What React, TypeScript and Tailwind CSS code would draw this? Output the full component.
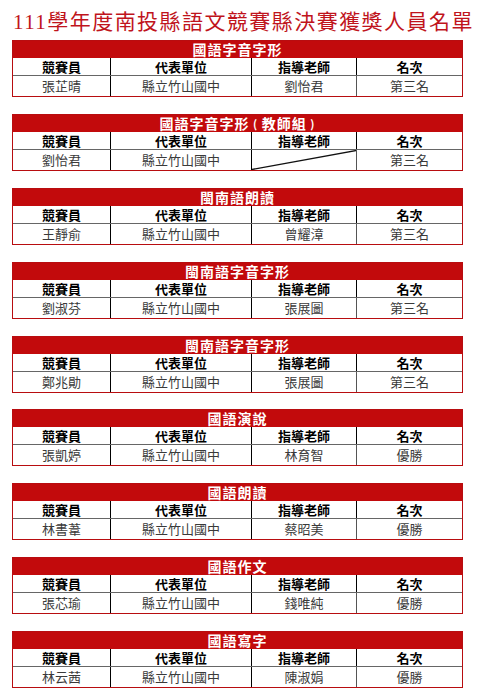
const rows = [
  { title: "國語字音字形", name: "張芷晴", school: "縣立竹山國中", teacher: "劉怡君", rank: "第三名" },
  { title: "國語字音字形", sub: "教師組", name: "劉怡君", school: "縣立竹山國中", teacher: "", rank: "第三名" },
  { title: "閩南語朗讀", name: "王靜俞", school: "縣立竹山國中", teacher: "曾耀漳", rank: "第三名" },
  { title: "閩南語字音字形", name: "劉淑芬", school: "縣立竹山國中", teacher: "張展圖", rank: "第三名" },
  { title: "閩南語字音字形", name: "鄭兆勛", school: "縣立竹山國中", teacher: "張展圖", rank: "第三名" },
  { title: "國語演說", name: "張凱婷", school: "縣立竹山國中", teacher: "林育智", rank: "優勝" },
  { title: "國語朗讀", name: "林書葦", school: "縣立竹山國中", teacher: "蔡昭美", rank: "優勝" },
  { title: "國語作文", name: "張芯瑜", school: "縣立竹山國中", teacher: "錢唯純", rank: "優勝" },
  { title: "國語寫字", name: "林云茜", school: "縣立竹山國中", teacher: "陳淑娟", rank: "優勝" },
];

const heads = ["競賽員", "代表單位", "指導老師", "名次"];

type Row = { title: string; sub?: string; name: string; school: string; teacher: string; rank: string };

const AwardTable = ({ row }: { row: Row }) => {
  return (
    <div className="border border-[#b80d10] bg-white">
      <div className="h-[17px] bg-[#c20a0c] text-white font-bold text-[14px] tracking-[1px] leading-[17px] text-center whitespace-pre">
        {row.title}
        {row.sub && (
          <>
            <span className="text-[11px] leading-[11px] align-[1px]"> ( </span>
            {row.sub}
            <span className="text-[11px] leading-[11px] align-[1px]"> )</span>
          </>
        )}
      </div>
      <div className="grid grid-cols-[97px_141px_105px_1fr] h-[18px] border-b border-[#666] text-[13px] font-bold text-black leading-[17px] text-center">
        {heads.map((h, i) => (
          <div key={h} className={i > 0 ? "border-l border-black" : ""}>
            {h}
          </div>
        ))}
      </div>
      <div className="grid grid-cols-[97px_141px_105px_1fr] h-[20px] text-[13px] text-[#3a3a3a] leading-[20px] text-center">
        <div>{row.name}</div>
        <div className="border-l border-black">{row.school}</div>
        <div className="border-l border-black relative">
          {row.teacher || (
            <svg className="absolute inset-0 w-full h-full" viewBox="0 0 104 20" preserveAspectRatio="none">
              <line x1="0" y1="19.5" x2="104" y2="0.5" stroke="#111" strokeWidth="1.3" />
            </svg>
          )}
        </div>
        <div className="border-l border-[#555]">{row.rank}</div>
      </div>
    </div>
  );
};

export default function App() {
  return (
    <div
      className="w-[477px] h-[700px] bg-white overflow-hidden"
      style={{ fontFamily: '"Noto Sans CJK TC", "Noto Sans", sans-serif' }}
    >
      <div
        className="h-[40px] pl-[13px] pt-[9px] text-[21px] tracking-[1.45px] leading-[26px] text-[#c0141c] whitespace-nowrap"
        style={{ fontFamily: '"Liberation Serif", "Noto Sans CJK TC", serif' }}
      >
        111學年度南投縣語文競賽縣決賽獲獎人員名單
      </div>
      <div className="ml-[12px] w-[451px] flex flex-col gap-[16.875px]">
        {rows.map((r, i) => (
          <AwardTable key={i} row={r} />
        ))}
      </div>
    </div>
  );
}
